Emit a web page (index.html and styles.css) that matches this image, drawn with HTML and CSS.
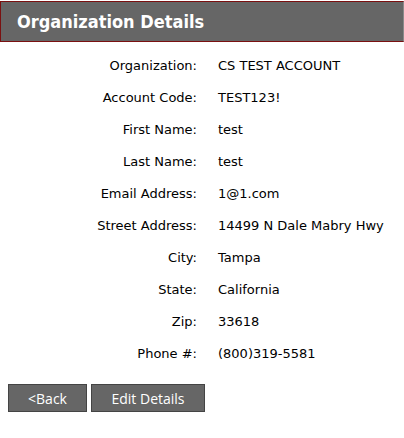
FILE: index.html
```html
<!DOCTYPE html>
<html>
<head>
<meta charset="utf-8">
<link rel="stylesheet" href="styles.css">
</head>
<body>
<div class="page">
  <div class="header">Organization Details</div>
  <div class="details">
    <div class="label">Organization:</div><div class="value">CS TEST ACCOUNT</div>
    <div class="label">Account Code:</div><div class="value">TEST123!</div>
    <div class="label">First Name:</div><div class="value">test</div>
    <div class="label">Last Name:</div><div class="value">test</div>
    <div class="label">Email Address:</div><div class="value">1@1.com</div>
    <div class="label">Street Address:</div><div class="value">14499 N Dale Mabry Hwy</div>
    <div class="label">City:</div><div class="value">Tampa</div>
    <div class="label">State:</div><div class="value">California</div>
    <div class="label">Zip:</div><div class="value">33618</div>
    <div class="label">Phone #:</div><div class="value">(800)319-5581</div>
  </div>
  <div class="actions">
    <button class="btn btn-back">&lt;Back</button>
    <button class="btn btn-edit">Edit Details</button>
  </div>
</div>
</body>
</html>
```
FILE: styles.css
```css
html, body {
  margin: 0;
  padding: 0;
  background: #ffffff;
}
.page {
  padding-top: 1px;
  font-family: "DejaVu Sans", Verdana, sans-serif;
  font-size: 13px;
  color: #000;
}
.header {
  background: #666666;
  border: 1px solid #7a1010;
  border-right-color: #8a8a8a;
  height: 39px;
  line-height: 39px;
  padding-left: 16px;
  color: #ffffff;
  font-family: "DejaVu Sans Condensed", "DejaVu Sans", sans-serif;
  font-weight: bold;
  font-size: 18px;
  width: 386px;
}
.details {
  display: grid;
  grid-template-columns: 189px auto;
  column-gap: 21px;
  grid-auto-rows: 32px;
  margin: 7px 0 0 8px;
  align-items: center;
}
.label {
  text-align: right;
}
.actions {
  display: flex;
  gap: 4px;
  margin: 15px 0 0 8px;
}
.btn {
  background: #666666;
  border: 1px solid #444444;
  color: #ffffff;
  font-family: "Open Sans", "DejaVu Sans", sans-serif;
  font-size: 14px;
  font-weight: 500;
  height: 28px;
  padding: 0;
  margin: 0;
}
.btn-back { width: 79px; }
.btn-edit { width: 114px; }
```
